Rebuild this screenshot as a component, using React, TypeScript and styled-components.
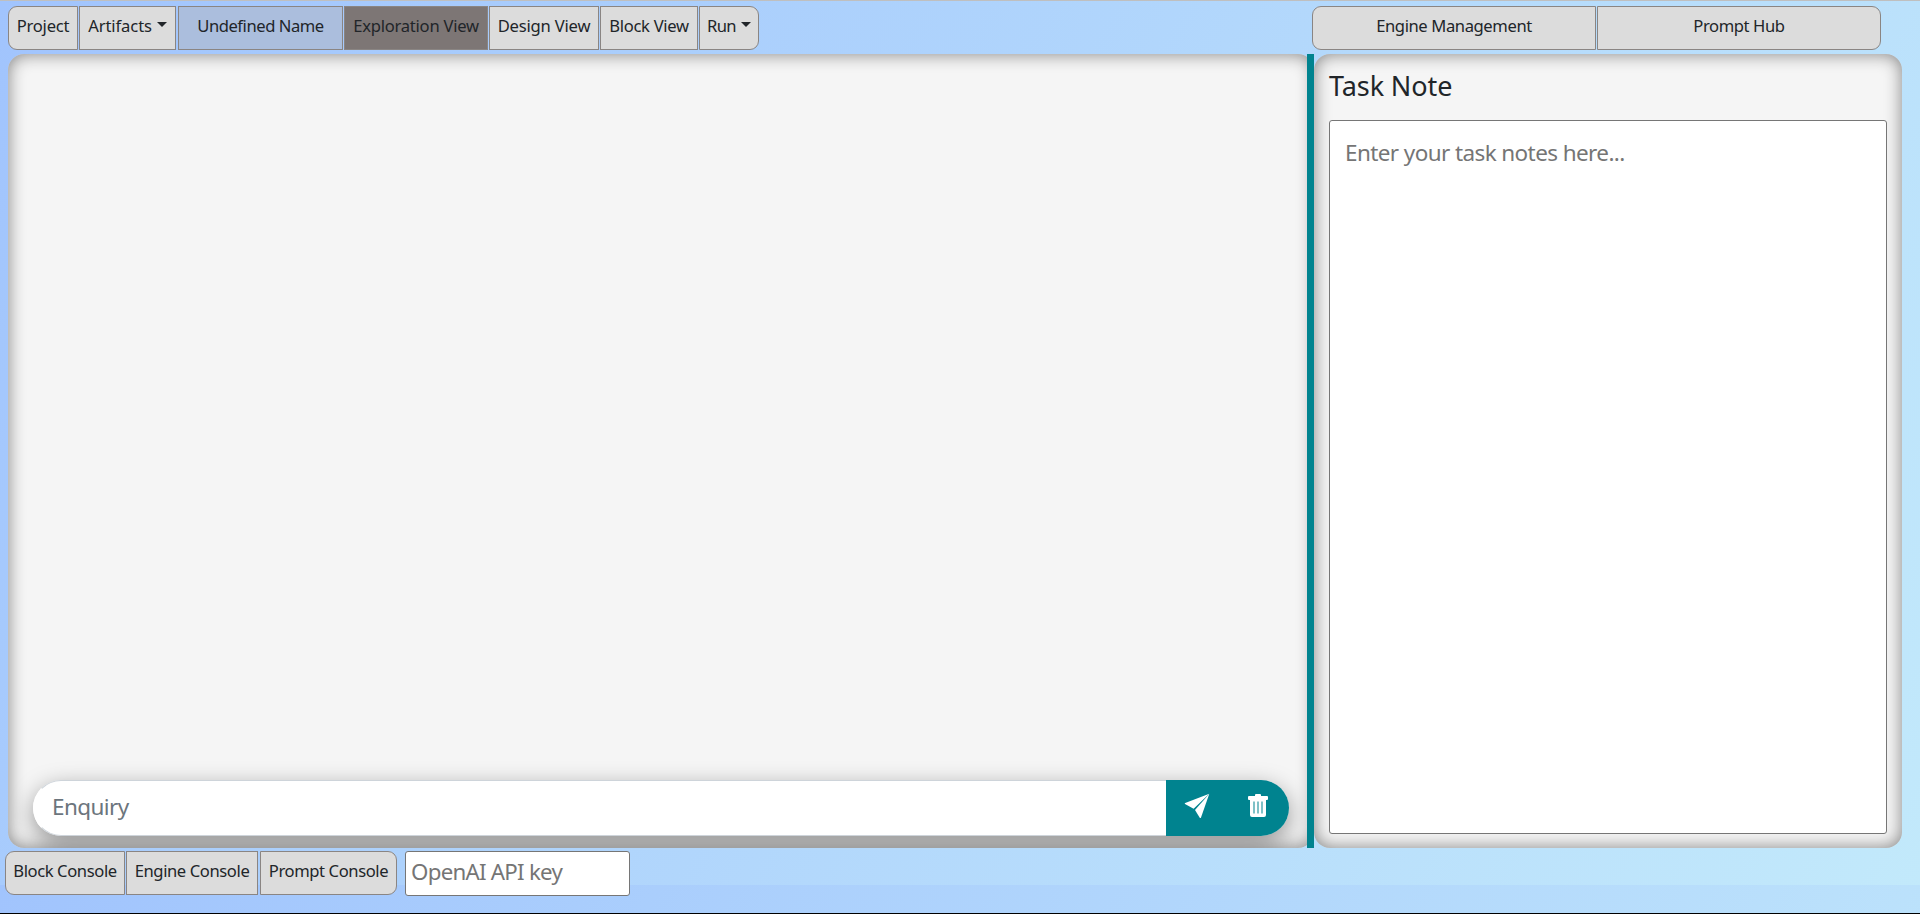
import React from 'react';
import styled, { createGlobalStyle, css } from 'styled-components';

const GlobalStyle = createGlobalStyle`
  *, *::before, *::after { box-sizing: border-box; }
  html { background: #a1c4fd; }
  body {
    margin: 0;
    color: #212529;
    font-family: 'Noto Sans', 'Open Sans', sans-serif;
    overflow: hidden;
  }
  input, textarea, button { font-family: inherit; color: inherit; margin: 0; }
`;

const Page = styled.div`
  display: flex;
  flex-direction: column;
  height: 914px;
  border-top: 1px solid #bfbfbf;
  border-bottom: 1px solid #000;
  background: linear-gradient(120deg, #a1c4fd 0%, #c2e9fb 100%) 0 0 / 100% 884px repeat-y;
`;

const TopBar = styled.header`
  display: flex;
  justify-content: space-between;
  height: 53px;
  padding: 5px 39px 0 8px;
`;

const ButtonGroup = styled.div`
  display: flex;
  gap: 1px;
`;

const BarButton = styled.button<{
  $width: number;
  $edge?: 'start' | 'end';
  $tone?: 'name' | 'active';
  $indent?: number;
  $spacing?: number;
}>`
  display: flex;
  align-items: center;
  justify-content: center;
  width: ${(p) => p.$width}px;
  height: 44px;
  margin-left: ${(p) => p.$indent ?? 0}px;
  padding: 0 0 4px;
  border: 1px solid #8a8583;
  border-radius: ${(p) =>
    p.$edge === 'start' ? '9px 0 0 9px' : p.$edge === 'end' ? '0 9px 9px 0' : '0'};
  background: ${(p) =>
    p.$tone === 'name' ? '#abbedd' : p.$tone === 'active' ? '#7d7675' : '#dcdcdc'};
  font-size: 16.6px;
  line-height: 24px;
  letter-spacing: ${(p) => p.$spacing ?? -0.4}px;
  white-space: nowrap;
`;

const Caret = styled.span`
  margin: -3px 0 0 5px;
  border-top: 5px solid currentColor;
  border-left: 5px solid transparent;
  border-right: 5px solid transparent;
`;

const Workspace = styled.main`
  display: flex;
  height: 794px;
  padding: 0 18px 0 8px;
`;

const panel = css`
  display: flex;
  flex-direction: column;
  border-radius: 16px;
  background: #f5f5f5;
  box-shadow: inset 0 0 17px gray;
`;

const Exploration = styled.section`
  ${panel}
  width: 1306px;
  justify-content: flex-end;
  padding: 0 25px 12px;
  overflow: hidden;
`;

const Divider = styled.div`
  position: relative;
  width: 7px;
  margin-left: -7px;
  background: #00838f;
`;

const Notes = styled.aside`
  ${panel}
  width: 588px;
  padding: 14px 15px 14px;
`;

const Title = styled.h4`
  margin: 0 0 16px;
  font-size: 27px;
  font-weight: 400;
  line-height: 36px;
  letter-spacing: -0.1px;
`;

const NoteArea = styled.textarea`
  flex: 1;
  padding: 14px 15px;
  border: 1px solid #767676;
  border-radius: 3px;
  outline: 0;
  resize: none;
  background: #fff;
  font-size: 22.5px;
  line-height: 36px;
  letter-spacing: -0.6px;
  &::placeholder { color: #757575; }
`;

const EnquiryGroup = styled.form`
  display: flex;
  height: 56px;
  border-radius: 28px;
  box-shadow: 0 8px 24px rgba(0, 0, 0, 0.4);
`;

const EnquiryInput = styled.input`
  flex: 1;
  min-width: 0;
  padding: 0 18px 4px;
  border: 1px solid #ced4da;
  border-right: 0;
  border-left-color: #fff;
  border-radius: 28px 0 0 28px;
  outline: 0;
  background: #fff;
  font-size: 22.5px;
  letter-spacing: -0.6px;
  &::placeholder { color: #6c757d; opacity: 1; }
`;

const Actions = styled.div`
  display: flex;
  width: 123px;
  padding-right: 1px;
  border-radius: 0 28px 28px 0;
  background: #00838f;
`;

const IconButton = styled.button`
  display: flex;
  align-items: center;
  justify-content: center;
  width: 61px;
  padding: 0 0 5px;
  border: 0;
  background: none;
  color: #fff;
`;

const BottomBar = styled.footer`
  display: flex;
  padding: 3px 0 0 5px;
`;

const KeyInput = styled.input`
  width: 225px;
  height: 45px;
  margin-left: 8px;
  padding: 0 5px 4px;
  border: 1px solid #767676;
  border-radius: 3px;
  outline: 0;
  background: #fff;
  font-size: 22.3px;
  letter-spacing: -0.75px;
  &::placeholder { color: #757575; }
`;

const SendIcon = () => (
  <svg width="26" height="26" viewBox="0 0 26 26" fill="currentColor">
    <path d="M25.3.8 9.6 15.8 1 11.1Q.2 10.4 1.2 10.1Z" />
    <path d="M25.3.8 17 24.4Q16.4 25.7 15.6 24.5L11 17Z" />
  </svg>
);

const TrashIcon = () => (
  <svg width="20" height="24" viewBox="0 0 20 24">
    <path
      fill="currentColor"
      fillRule="evenodd"
      d="M1 2H7V1Q7 0 8 0H12Q13 0 13 1V2H19Q20 2 20 3V5Q20 6 19 6H18V21Q18 23 16 23H4Q2 23 2 21V6H1Q0 6 0 5V3Q0 2 1 2ZM5.5 7.5V19.5H6.5V7.5ZM9.5 7.5V19.5H10.5V7.5ZM13.5 7.5V19.5H14.5V7.5Z"
    />
  </svg>
);

export default function App() {
  return (
    <>
      <GlobalStyle />
      <Page>
        <TopBar>
          <ButtonGroup>
            <BarButton $width={70} $edge="start" $spacing={-0.25}>Project</BarButton>
            <BarButton $width={97} $spacing={-0.1}>Artifacts<Caret /></BarButton>
            <BarButton $width={165} $tone="name" $indent={1} $spacing={-0.45}>Undefined Name</BarButton>
            <BarButton $width={144} $tone="active" $spacing={-0.25}>Exploration View</BarButton>
            <BarButton $width={110} $spacing={-0.2}>Design View</BarButton>
            <BarButton $width={98} $spacing={-0.3}>Block View</BarButton>
            <BarButton $width={60} $edge="end" $spacing={-0.6}>Run<Caret /></BarButton>
          </ButtonGroup>
          <ButtonGroup>
            <BarButton $width={284} $edge="start">Engine Management</BarButton>
            <BarButton $width={284} $edge="end">Prompt Hub</BarButton>
          </ButtonGroup>
        </TopBar>
        <Workspace>
          <Exploration>
            <EnquiryGroup>
              <EnquiryInput placeholder="Enquiry" />
              <Actions>
                <IconButton type="button" aria-label="Send"><SendIcon /></IconButton>
                <IconButton type="button" aria-label="Delete"><TrashIcon /></IconButton>
              </Actions>
            </EnquiryGroup>
          </Exploration>
          <Divider />
          <Notes>
            <Title>Task Note</Title>
            <NoteArea placeholder="Enter your task notes here..." />
          </Notes>
        </Workspace>
        <BottomBar>
          <ButtonGroup>
            <BarButton $width={120} $edge="start">Block Console</BarButton>
            <BarButton $width={132}>Engine Console</BarButton>
            <BarButton $width={137} $edge="end" $indent={1}>Prompt Console</BarButton>
          </ButtonGroup>
          <KeyInput placeholder="OpenAI API key" />
        </BottomBar>
      </Page>
    </>
  );
}
